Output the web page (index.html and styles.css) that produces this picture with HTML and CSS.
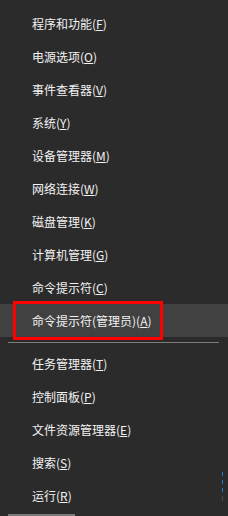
FILE: index.html
```html
<!DOCTYPE html>
<html lang="zh-CN">
<head>
    <meta charset="UTF-8">
    <title>Win+X 菜单</title>
    <link rel="stylesheet" href="styles.css">
</head>
<body>

<!-- Quick link menu -->
<ul class="quick-menu">
    <li class="menu-item">程序和功能(<u>F</u>)</li>
    <li class="menu-item">电源选项(<u>O</u>)</li>
    <li class="menu-item">事件查看器(<u>V</u>)</li>
    <li class="menu-item">系统(<u>Y</u>)</li>
    <li class="menu-item">设备管理器(<u>M</u>)</li>
    <li class="menu-item">网络连接(<u>W</u>)</li>
    <li class="menu-item">磁盘管理(<u>K</u>)</li>
    <li class="menu-item">计算机管理(<u>G</u>)</li>
    <li class="menu-item">命令提示符(<u>C</u>)</li>
    <li class="menu-item active">命令提示符(管理员)(<u>A</u>)<span class="mark-box"></span></li>
    <li class="separator"></li>
    <li class="menu-item">任务管理器(<u>T</u>)</li>
    <li class="menu-item">控制面板(<u>P</u>)</li>
    <li class="menu-item">文件资源管理器(<u>E</u>)</li>
    <li class="menu-item">搜索(<u>S</u>)</li>
    <li class="menu-item">运行(<u>R</u>)</li>
</ul>

<!-- Taskbar bits peeking in -->
<div class="tray-dots">
    <span class="dot blue"></span>
    <span class="dot blue"></span>
    <span class="dot blue third"></span>
    <span class="dot grey"></span>
</div>
<div class="start-bar"></div>

</body>
</html>
```

FILE: styles.css
```css
body {
    margin: 0;
    padding: 0;
    width: 228px;
    height: 516px;
    overflow: hidden;
    background-color: #2b2b2b;
    font-family: "Noto Sans CJK SC", "Microsoft YaHei", sans-serif;
    color: #f2f2f2;
    position: relative;
}

/* Menu */
.quick-menu {
    list-style: none;
    margin: 0;
    padding: 7px 0 0 0;
}

.menu-item {
    height: 33px;
    line-height: 33px;
    padding-left: 32px;
    font-size: 12px;
    white-space: nowrap;
    position: relative;
}

.menu-item u {
    text-underline-offset: 1px;
}

.menu-item.active {
    background-color: #414141;
}

/* Red highlight box drawn on the screenshot */
.mark-box {
    position: absolute;
    top: -3px;
    left: 13px;
    width: 150px;
    height: 39px;
    box-sizing: border-box;
    border: 3px solid #ff0000;
}

.separator {
    height: 1px;
    margin: 5px 9px 4px 8px;
    background-color: #7b7b7b;
}

/* Taskbar remnants */
.tray-dots {
    position: absolute;
    left: 222px;
    top: 472px;
    width: 1px;
}

.dot {
    display: block;
    width: 1px;
    height: 4px;
    margin-bottom: 4px;
}

.dot.blue {
    background-color: #1c78d0;
}

.dot.third {
    margin-top: 4px;
}

.dot.grey {
    height: 5px;
    margin-top: 3px;
    background-color: #4a4a4a;
}

.start-bar {
    position: absolute;
    left: 8px;
    bottom: 0;
    width: 67px;
    height: 2px;
    background-color: #7a7a7a;
}
```
